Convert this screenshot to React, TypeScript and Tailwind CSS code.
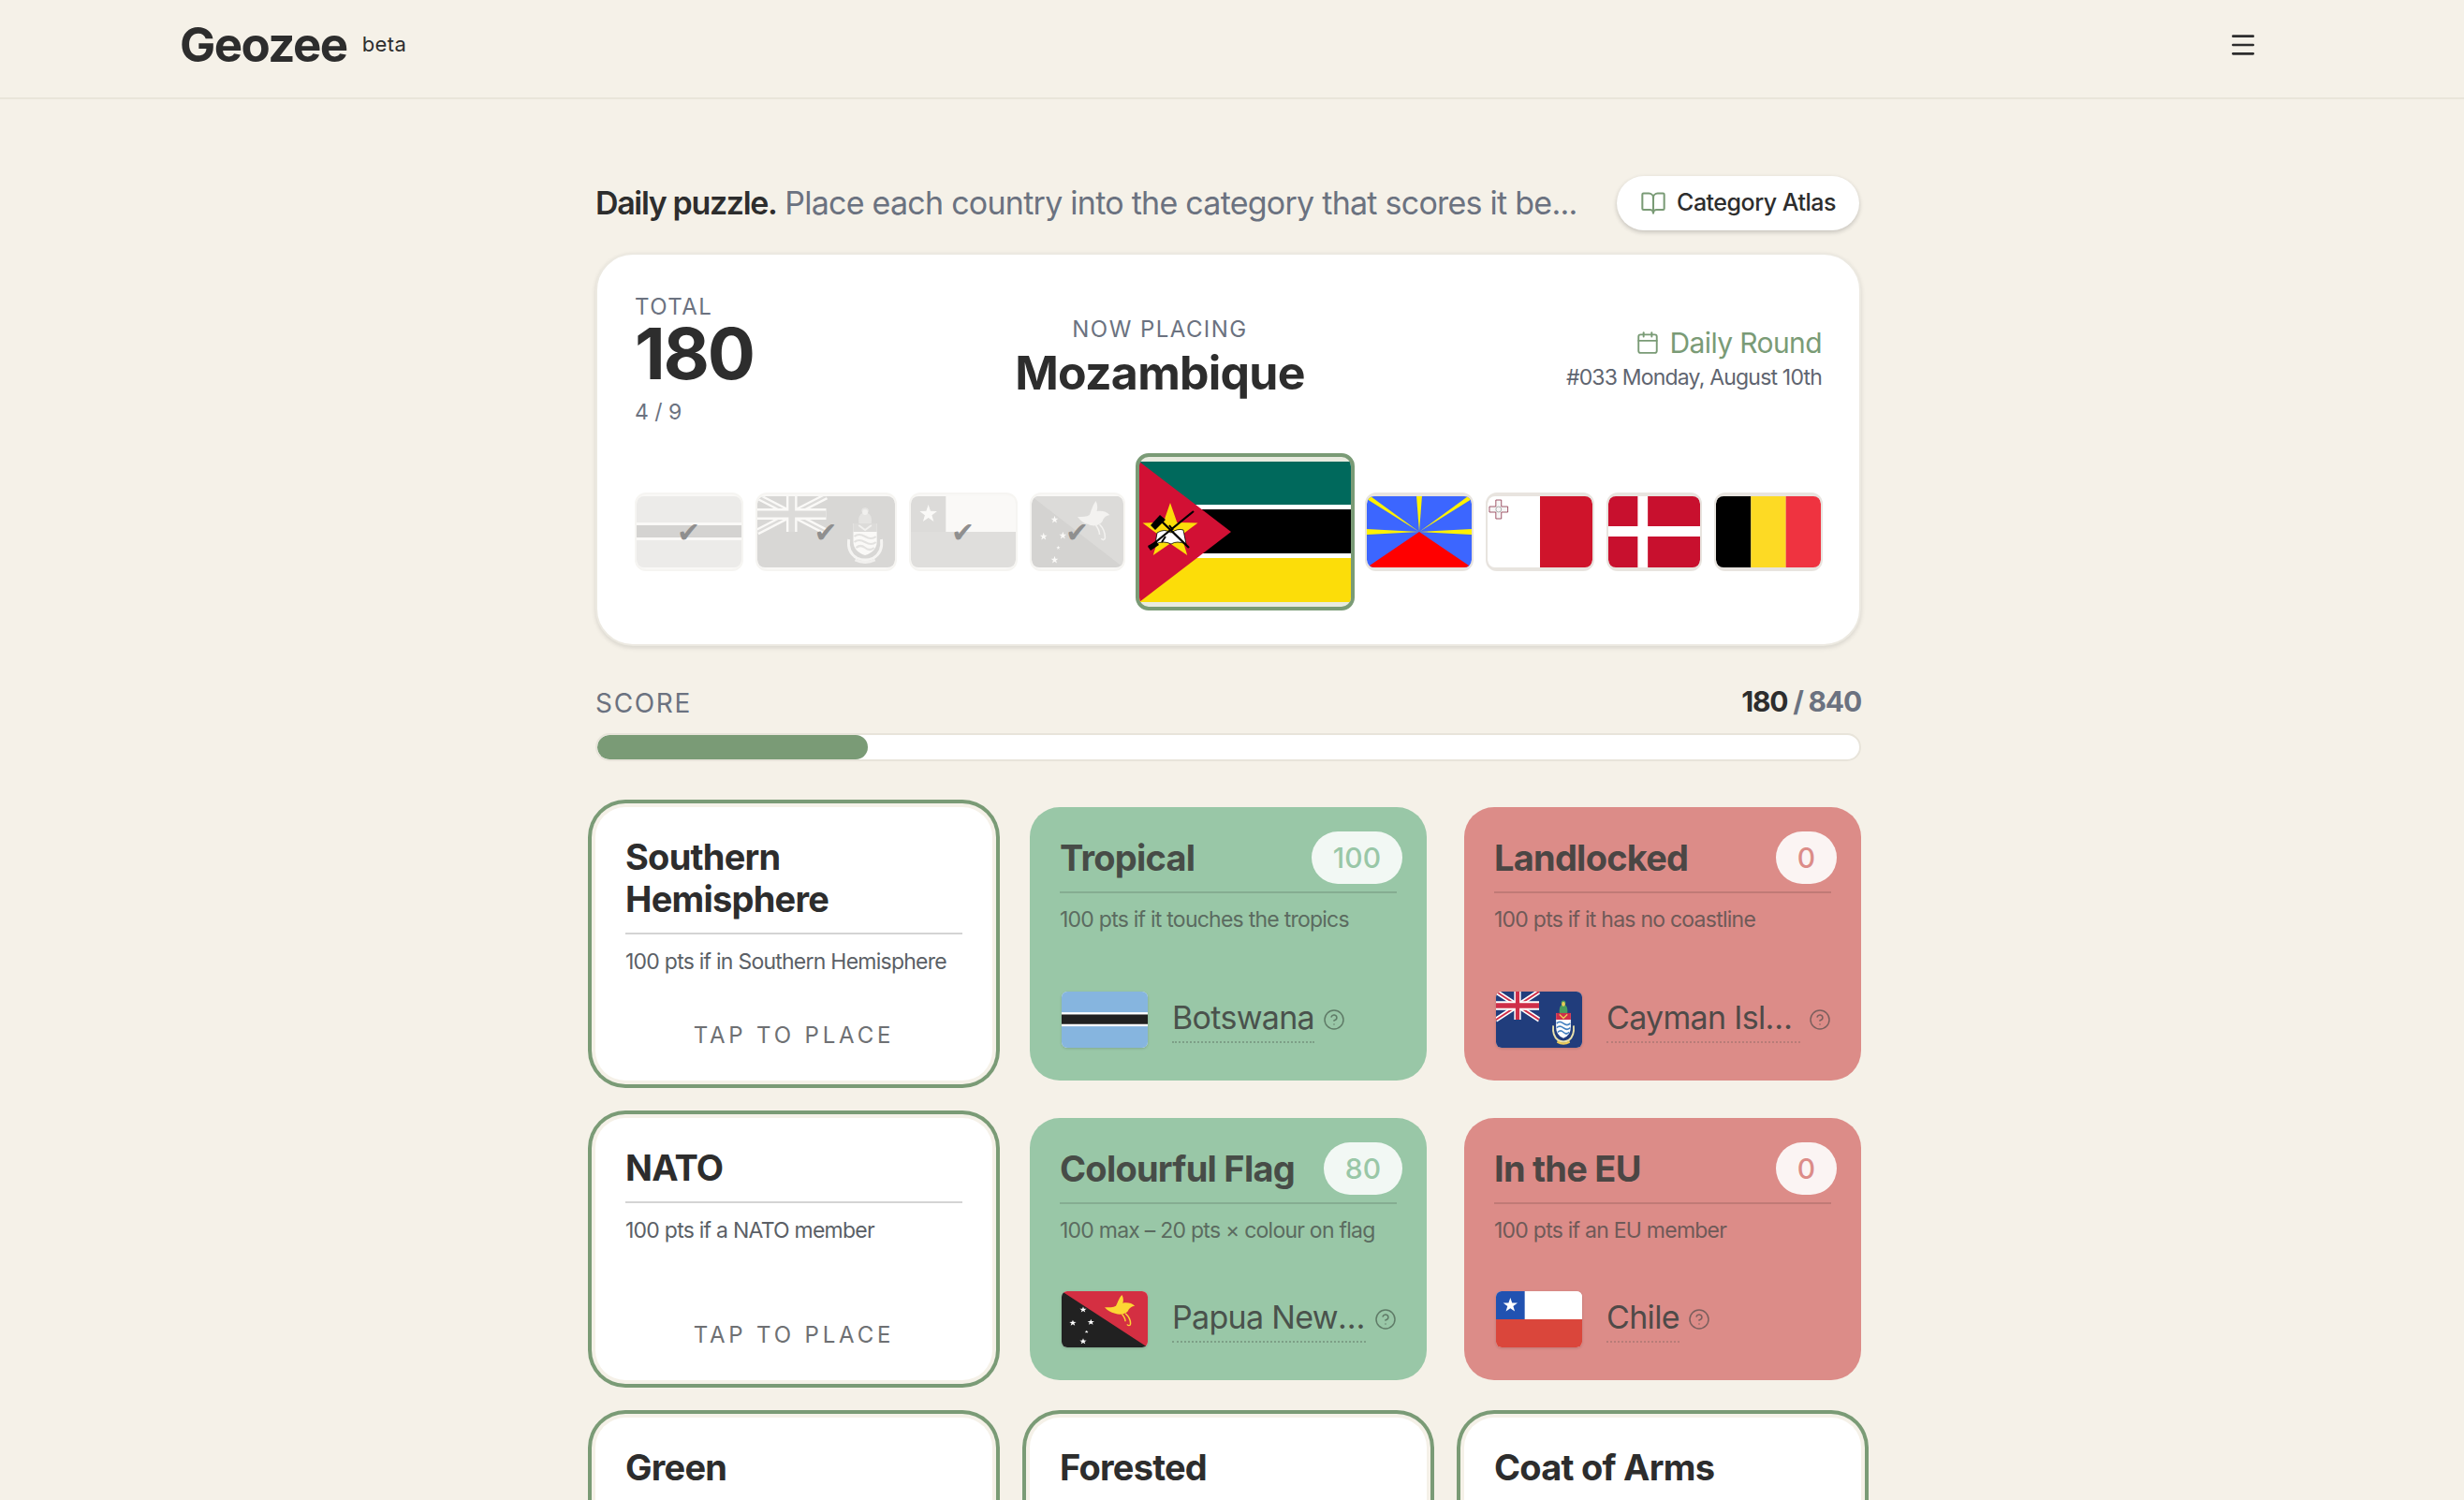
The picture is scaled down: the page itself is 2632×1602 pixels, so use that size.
import React from 'react';
import { BookOpen, Calendar, CircleHelp, Menu } from 'lucide-react';

const star = (cx: number, cy: number, r: number) => {
  const pts: string[] = [];
  for (let i = 0; i < 10; i++) {
    const rad = i % 2 === 0 ? r : r * 0.4;
    const a = -Math.PI / 2 + (i * Math.PI) / 5;
    pts.push(`${cx + rad * Math.cos(a)},${cy + rad * Math.sin(a)}`);
  }
  return pts.join(' ');
};

const flagArt: Record<string, { box: string; art: React.ReactNode }> = {
  botswana: {
    box: '0 0 114 76',
    art: (
      <>
        <rect width="114" height="76" fill="#75aadb" />
        <rect y="28" width="114" height="19" fill="#fff" />
        <rect y="31" width="114" height="13" fill="#000" />
      </>
    ),
  },
  cayman: {
    box: '0 0 152 76',
    art: (
      <>
        <rect width="152" height="76" fill="#012169" />
        <path d="M0 0L76 38M76 0L0 38" stroke="#fff" strokeWidth="7" />
        <path d="M0 0L76 38M76 0L0 38" stroke="#c8102e" strokeWidth="2.5" />
        <path d="M38 0V38M0 19H76" stroke="#fff" strokeWidth="12" />
        <path d="M38 0V38M0 19H76" stroke="#c8102e" strokeWidth="7" />
        {/* crest */}
        <path d="M112 29Q111 20 116 18Q113 13 119 12Q125 13 122 18Q127 20 126 29Z" fill="#2f8f46" />
        <circle cx="119" cy="17" r="3" fill="#e8c440" />
        <path d="M106 29H132V48Q132 59 119 63Q106 59 106 48Z" fill="#fff" />
        <rect x="106" y="29" width="26" height="9" fill="#c8102e" />
        <path d="M112 31L119 36L126 31" fill="none" stroke="#e8c440" strokeWidth="2" />
        <path d="M107 43Q112 39 119 43T131 43M107 49Q112 45 119 49T131 49M109 55Q114 51 119 55T129 55" fill="none" stroke="#2a6fb8" strokeWidth="2.2" />
        <path d="M101 46Q99 60 110 66Q119 70 128 66Q139 60 137 46" fill="none" stroke="#e8dfa0" strokeWidth="3" />
        <path d="M108 68Q119 73 130 68" fill="none" stroke="#e8c440" strokeWidth="3" />
      </>
    ),
  },
  chile: {
    box: '0 0 114 76',
    art: (
      <>
        <rect width="114" height="38" fill="#fff" />
        <rect y="38" width="114" height="38" fill="#d52b1e" />
        <rect width="38" height="38" fill="#0039a6" />
        <polygon points={star(19, 19, 10)} fill="#fff" />
      </>
    ),
  },
  papua: {
    box: '0 0 100 76',
    art: (
      <>
        <rect width="100" height="76" fill="#000" />
        <polygon points="0,0 100,0 100,76" fill="#ce1126" />
        <path d="M70 5C72 9 72 13 71 16C76 15 82 16 85 20C80 21 78 24 77 27C74 31 68 33 62 30C57 29 53 26 50 22C55 22 60 22 63 20C65 16 66 10 70 5Z" fill="#fcd116" />
        <path d="M74 30C78 34 80 38 80 44C80 47 77 47 76 45M70 31C73 35 74 38 74 41" fill="none" stroke="#fcd116" strokeWidth="1.6" />
        <polygon points={star(25, 25, 4.2)} fill="#fff" />
        <polygon points={star(13, 43, 4.2)} fill="#fff" />
        <polygon points={star(34, 42, 4.2)} fill="#fff" />
        <polygon points={star(29, 55, 2.2)} fill="#fff" />
        <polygon points={star(25, 68, 4.2)} fill="#fff" />
      </>
    ),
  },
  mozambique: {
    box: '0 0 226 150',
    art: (
      <>
        <rect width="226" height="46" fill="#00695c" />
        <rect y="46" width="226" height="5" fill="#fff" />
        <rect y="51" width="226" height="47" fill="#000" />
        <rect y="98" width="226" height="5" fill="#fff" />
        <rect y="103" width="226" height="47" fill="#fcdd09" />
        <polygon points="0,0 98,75 0,150" fill="#d21034" />
        <polygon points={star(33, 75, 31)} fill="#fcdd09" />
        <path d="M19 76Q27 71 34 76Q41 71 47 73L50 88Q40 84 34 88Q26 84 17 88Z" fill="#fff" stroke="#000" strokeWidth="0.8" />
        <path d="M12 68L22 57L28 62L17 73Z" fill="#000" />
        <path d="M22 62L53 92" stroke="#000" strokeWidth="2.4" />
        <path d="M10 92L58 53" stroke="#000" strokeWidth="2.2" />
        <path d="M9 90L18 85L21 89L12 95Z" fill="#000" />
        <path d="M28 80L24 86M36 73L32 68" stroke="#000" strokeWidth="2" />
      </>
    ),
  },
  reunion: {
    box: '0 0 114 76',
    art: (
      <>
        <rect width="114" height="76" fill="#3c66ff" />
        <polygon points="0,76 57,38 114,76" fill="#f00" />
        <polygon points="57,38 0,3 0,0 4,0" fill="#fff200" />
        <polygon points="57,38 54,0 60,0" fill="#fff200" />
        <polygon points="57,38 110,0 114,0 114,3" fill="#fff200" />
        <polygon points="57,38 0,35 0,41" fill="#fff200" />
        <polygon points="57,38 114,35 114,41" fill="#fff200" />
      </>
    ),
  },
  malta: {
    box: '0 0 114 76',
    art: (
      <>
        <rect width="57" height="76" fill="#fff" />
        <rect x="57" width="57" height="76" fill="#cf142b" />
        <path d="M9 4H15V11H22V17H15V24H9V17H2V11H9Z" fill="#f6f6f6" stroke="#8a2f45" strokeWidth="0.8" />
        <circle cx="12" cy="14" r="3" fill="none" stroke="#999" strokeWidth="0.8" />
      </>
    ),
  },
  denmark: {
    box: '0 0 100 76',
    art: (
      <>
        <rect width="100" height="76" fill="#c8102e" />
        <rect x="32" width="11" height="76" fill="#fff" />
        <rect y="32" width="100" height="11" fill="#fff" />
      </>
    ),
  },
  belgium: {
    box: '0 0 114 76',
    art: (
      <>
        <rect width="38" height="76" fill="#000" />
        <rect x="38" width="38" height="76" fill="#fdda24" />
        <rect x="76" width="38" height="76" fill="#ef3340" />
      </>
    ),
  },
};

function Flag({ name, className }: { name: string; className?: string }) {
  const f = flagArt[name];
  return (
    <svg viewBox={f.box} preserveAspectRatio="none" className={className}>
      {f.art}
    </svg>
  );
}

const queue = [
  { flag: 'botswana', w: 'w-[116px]', done: true },
  { flag: 'cayman', w: 'w-[151px]', done: true },
  { flag: 'chile', w: 'w-[116px]', done: true },
  { flag: 'papua', w: 'w-[102px]', done: true },
  { flag: 'mozambique', w: 'w-[234px]', current: true },
  { flag: 'reunion', w: 'w-[116px]' },
  { flag: 'malta', w: 'w-[116px]' },
  { flag: 'denmark', w: 'w-[102px]' },
  { flag: 'belgium', w: 'w-[116px]' },
];

type Cat = {
  title: string;
  desc: string;
  score?: number;
  country?: string;
  flag?: string;
  good?: boolean;
};

const categories: Cat[] = [
  { title: 'Southern Hemisphere', desc: '100 pts if in Southern Hemisphere' },
  { title: 'Tropical', desc: '100 pts if it touches the tropics', score: 100, country: 'Botswana', flag: 'botswana', good: true },
  { title: 'Landlocked', desc: '100 pts if it has no coastline', score: 0, country: 'Cayman Islands', flag: 'cayman' },
  { title: 'NATO', desc: '100 pts if a NATO member' },
  { title: 'Colourful Flag', desc: '100 max – 20 pts × colour on flag', score: 80, country: 'Papua New Guinea', flag: 'papua', good: true },
  { title: 'In the EU', desc: '100 pts if an EU member', score: 0, country: 'Chile', flag: 'chile' },
  { title: 'Green', desc: '100 pts if green on flag' },
  { title: 'Forested', desc: '100 pts by forest cover' },
  { title: 'Coat of Arms', desc: '100 pts if flag has a crest' },
];

function OpenCard({ cat }: { cat: Cat }) {
  return (
    <div className="flex flex-col rounded-[32px] bg-white px-8 pb-8 ring-4 ring-[#7a9b76] ring-offset-4 ring-offset-[#f5f1e8]">
      <h3 className="border-b-2 border-[#d4d4d4] pt-[31px] pb-[13px] text-[38px] leading-[45px] font-bold tracking-[-0.02em] text-[#2d2d2d]">
        {cat.title}
      </h3>
      <p className="mt-[13px] text-[23px] leading-8 tracking-[-0.033em] text-[#5b5f66]">{cat.desc}</p>
      <div className="mt-auto pt-[47px] text-center text-[24px] leading-8 tracking-[0.16em] text-[#6e7073]">
        TAP TO PLACE
      </div>
    </div>
  );
}

function PlacedCard({ cat }: { cat: Cat }) {
  const tone = cat.good
    ? {
        bg: 'bg-[#99c7a7]',
        title: 'text-[#474c47]',
        line: 'border-[#85ad91]',
        desc: 'text-[#5b6b60]',
        pill: 'bg-[#f2f8f4] text-[#99c7a7]',
        name: 'text-[#4a524c]',
        dots: 'border-[#7d9f87]',
        help: 'text-[#5f7b67]',
      }
    : {
        bg: 'bg-[#dc8c88]',
        title: 'text-[#4b4644]',
        line: 'border-[#c07a76]',
        desc: 'text-[#6f5a58]',
        pill: 'bg-[#fbf4f3] text-[#dc8c88]',
        name: 'text-[#4f4a48]',
        dots: 'border-[#b87c78]',
        help: 'text-[#7b5f5d]',
      };
  return (
    <div className={`flex flex-col rounded-[32px] px-8 pb-[35px] ${tone.bg}`}>
      <div className={`flex h-[92px] items-center justify-between border-b-2 pt-[26px] pb-2 ${tone.line}`}>
        <h3 className={`text-[38px] leading-[45px] font-bold tracking-[-0.02em] ${tone.title}`}>{cat.title}</h3>
        <span className={`-mr-[6px] flex h-14 min-w-[65px] items-center justify-center rounded-full px-[23px] text-[30px] font-medium ${tone.pill}`}>
          {cat.score}
        </span>
      </div>
      <p className={`mt-[12px] text-[23px] leading-8 tracking-[-0.033em] ${tone.desc}`}>{cat.desc}</p>
      <div className="mt-auto flex items-center pt-[49px]">
        <div className="ml-[2px] h-[60px] w-[92px] shrink-0 overflow-hidden rounded-[6px] bg-white shadow-[0_1px_3px_rgba(0,0,0,0.15)]">
          <Flag name={cat.flag as string} className="h-full w-full opacity-[0.87]" />
        </div>
        <span className={`ml-[26px] max-w-[207px] truncate border-b-2 border-dotted pb-[3px] text-[34px] leading-[45px] tracking-[-0.02em] ${tone.name} ${tone.dots}`}>
          {cat.country}
        </span>
        <CircleHelp className={`ml-[9px] h-6 w-6 shrink-0 ${tone.help}`} strokeWidth={1.5} />
      </div>
    </div>
  );
}

export default function App() {
  const score = 180;
  const maxScore = 840;

  return (
    <div className="h-screen overflow-hidden bg-[#f5f1e8] font-['Inter',sans-serif]">
      {/* Header */}
      <header className="flex h-[106px] items-center justify-between border-b-2 border-[#e9e5da] pr-[220px] pb-2 pl-[192px]">
        <div className="-mt-[2px] flex items-center gap-4">
          <span className="text-[51px] leading-none font-bold tracking-[-0.03em] text-[#2d2d2d]">Geozee</span>
          <span className="text-[22px] tracking-[0.02em] text-[#2d2d2d]">beta</span>
        </div>
        <Menu className="h-8 w-8 text-[#2d2d2d]" strokeWidth={2} />
      </header>

      <main className="ml-[636px] w-[1352px] pt-[82px]">
        {/* Intro row */}
        <div className="flex items-center justify-between">
          <p className="whitespace-nowrap text-[34px] leading-[58px] tracking-[-0.022em] text-[#6b7280]">
            <span className="font-semibold tracking-[-0.04em] text-[#2d2d2d]">Daily puzzle.</span> Place each country into the category that scores it be...
          </p>
          <button className="mr-[2px] flex h-[58px] w-[259px] items-center justify-center gap-[11px] rounded-full bg-white text-[25px] font-medium tracking-[-0.02em] text-[#2d2d2d] shadow-[0_2px_5px_rgba(0,0,0,0.2)]">
            <BookOpen className="h-7 w-7 text-[#7a9b76]" strokeWidth={1.75} />
            Category Atlas
          </button>
        </div>

        {/* Now placing */}
        <section className="mt-[24px] h-[420px] rounded-[40px] border-2 border-[#ece9e1] bg-white px-[40px] pt-[42px] shadow-[0_2px_5px_rgba(0,0,0,0.12)]">
          <div className="flex h-[126px] justify-between">
            <div className="w-[274px]">
              <div className="text-[24px] leading-7 tracking-[0.06em] text-[#6b7280]">TOTAL</div>
              <div className="text-[76px] leading-[70px] font-bold tracking-[-0.03em] text-[#2d2d2d]">180</div>
              <div className="mt-[14px] text-[23px] leading-7 text-[#6b7280]">4 / 9</div>
            </div>
            <div className="pt-6 text-center">
              <div className="text-[24px] leading-7 tracking-[0.06em] text-[#6b7280]">NOW PLACING</div>
              <div className="mt-[2px] text-[50px] leading-[60px] font-bold tracking-[-0.015em] text-[#2d2d2d]">Mozambique</div>
            </div>
            <div className="flex w-[420px] flex-col items-end pt-[32px]">
              <div className="flex items-center gap-[10px] text-[30px] leading-[40px] tracking-[-0.02em] text-[#7a9b76]">
                <Calendar className="h-[26px] w-[26px]" strokeWidth={1.75} />
                Daily Round
              </div>
              <div className="mt-px text-[23px] leading-8 tracking-[-0.035em] text-[#5f6570]">#033 Monday, August 10th</div>
            </div>
          </div>

          <div className="mt-[44px] flex items-center justify-center gap-[13px]">
            {queue.map((q) =>
              q.current ? (
                <div key={q.flag} className={`-mx-[2px] h-[168px] shrink-0 overflow-hidden rounded-[14px] border-4 border-[#7a9b76] bg-[#e8ebdf] py-[5px] ${q.w}`}>
                  <Flag name={q.flag} className="h-[150px] w-full" />
                </div>
              ) : (
                <div
                  key={q.flag}
                  className={`relative h-[84px] shrink-0 overflow-hidden rounded-[12px] border-2 py-[2px] ${q.w} ${
                    q.done ? 'border-[#f6f5f2] bg-[#f9f8f6]' : 'border-[#e8e4df] bg-[#e8e4df]'
                  }`}
                >
                  <Flag name={q.flag} className={`h-[76px] w-full rounded-[8px] ${q.done ? 'opacity-[0.15] grayscale' : ''}`} />
                  {q.done && (
                    <span className="absolute inset-0 flex items-center justify-center font-['DejaVu_Sans',sans-serif] text-[30px] text-[#8f8f8f]">
                      ✔
                    </span>
                  )}
                </div>
              )
            )}
          </div>
        </section>

        {/* Score */}
        <div className="mt-[43px] flex items-start justify-between">
          <span className="text-[28px] leading-9 tracking-[0.06em] text-[#6b7280]">SCORE</span>
          <span className="text-[30px] leading-8 font-bold tracking-[-0.04em] text-[#6b7280]">
            <span className="text-[#2d2d2d]">{score}</span> / {maxScore}
          </span>
        </div>
        <div className="mt-[14px] h-[30px] overflow-hidden rounded-full border-2 border-[#e8e4da] bg-white">
          <div className="h-full rounded-full bg-[#7a9b76]" style={{ width: `${(score / maxScore) * 100}%` }} />
        </div>

        {/* Categories */}
        <div className="mt-[49px] grid grid-cols-3 gap-10">
          {categories.map((c) => (c.country ? <PlacedCard key={c.title} cat={c} /> : <OpenCard key={c.title} cat={c} />))}
        </div>
      </main>
    </div>
  );
}
